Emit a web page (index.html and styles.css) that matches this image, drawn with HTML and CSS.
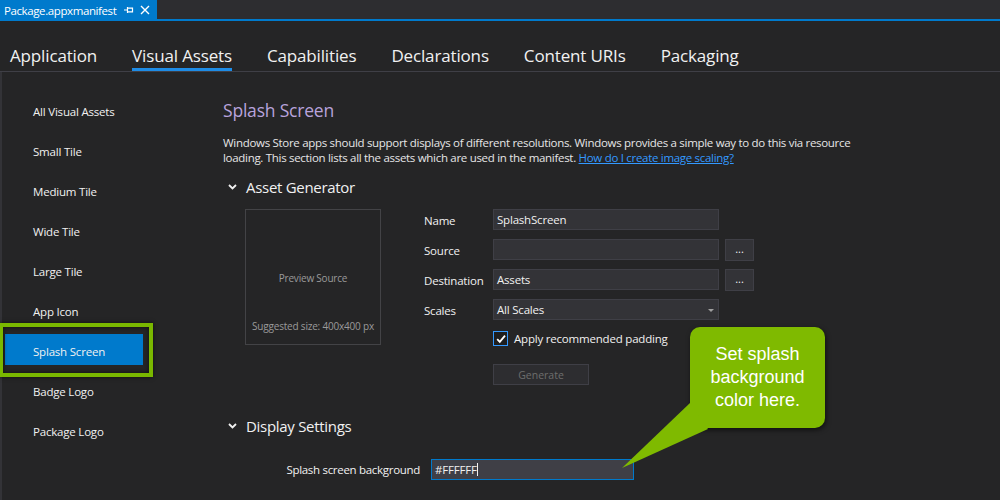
FILE: index.html
```html
<!DOCTYPE html>
<html>
<head>
<meta charset="utf-8">
<link rel="stylesheet" href="styles.css">
</head>
<body>
<div class="page">
  <div class="doc-tabs">
    <div class="doc-tab">
      <span class="doc-title">Package.appxmanifest</span>
      <svg class="pin" width="10" height="10" viewBox="0 0 10 10"><path d="M0 5h3.5M3.5 2v6M3.5 3.2h5v3.6h-5" fill="none" stroke="#fff" stroke-width="1.2"/></svg>
      <svg class="close" width="10" height="10" viewBox="0 0 10 10"><path d="M1 1l8 8M9 1l-8 8" stroke="#fff" stroke-width="1.4"/></svg>
    </div>
  </div>

  <nav class="nav">
    <div class="nav-item">Application</div>
    <div class="nav-item active">Visual Assets</div>
    <div class="nav-item">Capabilities</div>
    <div class="nav-item">Declarations</div>
    <div class="nav-item">Content URIs</div>
    <div class="nav-item">Packaging</div>
  </nav>

  <div class="body">
    <aside class="sidebar">
      <div class="side-item">All Visual Assets</div>
      <div class="side-item">Small Tile</div>
      <div class="side-item">Medium Tile</div>
      <div class="side-item">Wide Tile</div>
      <div class="side-item">Large Tile</div>
      <div class="side-item">App Icon</div>
      <div class="side-item selected">Splash Screen</div>
      <div class="side-item">Badge Logo</div>
      <div class="side-item">Package Logo</div>
    </aside>

    <main class="main">
      <h1 class="title">Splash Screen</h1>
      <p class="desc">Windows Store apps should support displays of different resolutions. Windows provides a simple way to do this via resource<br>loading. This section lists all the assets which are used in the manifest. <a class="link" href="#">How do I create image scaling?</a></p>

      <div class="section-head">
        <svg class="chev" width="9" height="6" viewBox="0 0 9 6"><path d="M1 1l3.5 3.5L8 1" fill="none" stroke="#f1f1f1" stroke-width="1.8"/></svg>
        <span>Asset Generator</span>
      </div>

      <div class="generator">
        <div class="preview">
          <span class="preview-label">Preview Source</span>
          <span class="preview-size">Suggested size: 400x400 px</span>
        </div>
        <div class="form">
          <div class="row">
            <label class="lbl">Name</label>
            <div class="input">SplashScreen</div>
          </div>
          <div class="row">
            <label class="lbl">Source</label>
            <div class="input"></div>
            <div class="btn-dots">...</div>
          </div>
          <div class="row">
            <label class="lbl">Destination</label>
            <div class="input">Assets</div>
            <div class="btn-dots">...</div>
          </div>
          <div class="row">
            <label class="lbl">Scales</label>
            <div class="input select">All Scales<span class="caret"></span></div>
          </div>
          <div class="check-row">
            <span class="checkbox"><svg width="12" height="12" viewBox="0 0 12 12"><path d="M2.2 6.2l2.6 2.6L10 2.6" fill="none" stroke="#fff" stroke-width="1.8"/></svg></span>
            <span>Apply recommended padding</span>
          </div>
          <div class="gen-row">
            <div class="btn-gen">Generate</div>
          </div>
        </div>
      </div>

      <div class="section-head display-head">
        <svg class="chev" width="9" height="6" viewBox="0 0 9 6"><path d="M1 1l3.5 3.5L8 1" fill="none" stroke="#f1f1f1" stroke-width="1.8"/></svg>
        <span>Display Settings</span>
      </div>

      <div class="bg-row">
        <label class="bg-lbl">Splash screen background</label>
        <div class="input focus">#FFFFFF<span class="text-caret"></span></div>
      </div>
    </main>
  </div>

  <div class="callout">
    <svg class="tail" width="80" height="50" viewBox="0 0 80 50"><polygon points="68,0 86,26 0,65" fill="#7fba00"/></svg>
    <div class="callout-text">Set splash<br>background<br>color here.</div>
  </div>
</div>
</body>
</html>
```

FILE: styles.css
```css
*, *::before, *::after { box-sizing: border-box; }

html, body {
  margin: 0;
  padding: 0;
}

body {
  background: #252526;
  color: #f1f1f1;
  font-family: "Segoe UI", "Open Sans", "Noto Sans", sans-serif;
  width: 1000px;
  height: 500px;
  overflow: hidden;
}

.page {
  position: relative;
  width: 1000px;
  height: 500px;
}

/* document tabs */
.doc-tabs {
  height: 21px;
  background: #2d2d30;
  box-shadow: inset 0 -2px 0 #007acc;
  display: flex;
}

.doc-tab {
  width: 157px;
  height: 21px;
  background: #007acc;
  display: flex;
  align-items: center;
  padding-left: 4px;
}

.doc-title {
  font-size: 11.5px;
  color: #fff;
  letter-spacing: -0.4px;
  margin-top: -1px;
}

.pin {
  margin-left: 8px;
  margin-top: -1px;
}

.close {
  margin-left: 6px;
  margin-top: -1px;
}

/* top navigation */
.nav {
  height: 51px;
  display: flex;
  align-items: flex-end;
  gap: 35px;
  padding-left: 10px;
  border-bottom: 1px solid #3f3f46;
}

.nav-item {
  font-size: 17px;
  line-height: 25px;
  color: #f1f1f1;
  border-bottom: 3px solid transparent;
  letter-spacing: -0.15px;
}

.nav-item.active {
  border-bottom-color: #1e8ce6;
}

/* body */
.body {
  display: flex;
  height: 428px;
  border-left: 2px solid #333337;
}

.sidebar {
  width: 198px;
  flex: none;
  padding-top: 22px;
  display: flex;
  flex-direction: column;
  gap: 9px;
}

.side-item {
  height: 31px;
  line-height: 29px;
  padding-top: 3px;
  margin-left: 3px;
  width: 138px;
  padding-left: 28px;
  font-size: 11.5px;
  color: #f1f1f1;
  letter-spacing: -0.2px;
}

.side-item.selected {
  background: #007acc;
  position: relative;
}

.side-item.selected::after {
  content: "";
  position: absolute;
  left: -6px;
  top: -11px;
  width: 154px;
  height: 54px;
  border: 4px solid #7ab800;
  box-shadow: 0 0 4px rgba(0,0,0,0.6), inset 0 0 4px rgba(0,0,0,0.6);
}

.main {
  padding-left: 23px;
  padding-top: 26px;
  flex: 1;
}

.title {
  margin: 0;
  font-size: 17.5px;
  line-height: 24px;
  font-weight: normal;
  color: #b8a3dc;
  letter-spacing: -0.2px;
}

.desc {
  margin: 13px 0 0 0;
  font-size: 11.5px;
  line-height: 15px;
  color: #e6e6e6;
  letter-spacing: -0.3px;
}

.link {
  color: #3399ff;
  text-decoration: underline;
}

.section-head {
  margin-top: 12px;
  display: flex;
  align-items: center;
  height: 20px;
  font-size: 15px;
  color: #f1f1f1;
  letter-spacing: -0.3px;
}

.chev {
  margin-left: 5px;
  margin-right: 9px;
}

.generator {
  display: flex;
  margin-top: 12px;
  margin-left: 22px;
}

.preview {
  width: 136px;
  height: 136px;
  border: 1px solid #434346;
  display: flex;
  flex-direction: column;
  align-items: center;
  font-size: 10px;
  color: #9a9a9a;
  letter-spacing: -0.2px;
}

.preview-label {
  margin-top: 61px;
}

.preview-size {
  margin-top: 34px;
}

.form {
  margin-left: 43px;
  display: flex;
  flex-direction: column;
  gap: 9px;
}

.row {
  display: flex;
  align-items: center;
  height: 21px;
}

.lbl {
  width: 69px;
  font-size: 11.5px;
  color: #f1f1f1;
  letter-spacing: -0.2px;
  padding-top: 1px;
}

.input {
  width: 226px;
  height: 21px;
  background: #333337;
  border: 1px solid #3f3f46;
  font-size: 11.5px;
  line-height: 20px;
  padding-left: 3px;
  color: #f1f1f1;
  letter-spacing: -0.2px;
  position: relative;
}

.caret {
  position: absolute;
  right: 4px;
  top: 9px;
  width: 0;
  height: 0;
  border-left: 3px solid transparent;
  border-right: 3px solid transparent;
  border-top: 3px solid #a0a0a0;
}

.btn-dots {
  width: 29px;
  height: 22px;
  margin-left: 6px;
  background: #333337;
  border: 1px solid #3f3f46;
  font-size: 11px;
  line-height: 18px;
  text-align: center;
  color: #f1f1f1;
}

.check-row {
  display: flex;
  align-items: center;
  margin-left: 69px;
  margin-top: 2px;
  font-size: 11.5px;
  color: #f1f1f1;
  letter-spacing: -0.2px;
}

.checkbox {
  width: 15px;
  height: 15px;
  border: 1px solid #3399ff;
  background: #1e1e1e;
  display: flex;
  align-items: center;
  justify-content: center;
  margin-right: 6px;
}

.gen-row {
  margin-left: 69px;
  margin-top: 9px;
}

.btn-gen {
  width: 96px;
  height: 21px;
  background: #2d2d30;
  border: 1px solid #3f3f46;
  font-size: 10.5px;
  line-height: 20px;
  text-align: center;
  color: #6d6d6d;
}

.display-head {
  margin-top: 31px;
}

.bg-row {
  display: flex;
  align-items: center;
  margin-top: 23px;
}

.bg-lbl {
  width: 197px;
  text-align: right;
  font-size: 11.5px;
  color: #f1f1f1;
  letter-spacing: -0.3px;
}

.input.focus {
  margin-left: 11px;
  width: 203px;
  background: #3f3f46;
  border: 1px solid #007acc;
}

.text-caret {
  display: inline-block;
  width: 1px;
  height: 13px;
  background: #f1f1f1;
  vertical-align: -2px;
}

/* callout annotation */
.callout {
  position: absolute;
  left: 690px;
  top: 327px;
  width: 135px;
  height: 101px;
  background: #7fba00;
  border-radius: 10px;
  box-shadow: 1px 2px 5px rgba(0,0,0,0.6);
  display: flex;
  align-items: center;
  justify-content: center;
}

.tail {
  position: absolute;
  left: -68px;
  top: 76px;
  overflow: visible;
}

.callout-text {
  position: relative;
  font-family: "Liberation Sans", Arial, sans-serif;
  font-size: 18px;
  line-height: 23px;
  color: #fff;
  text-align: center;
}
```
